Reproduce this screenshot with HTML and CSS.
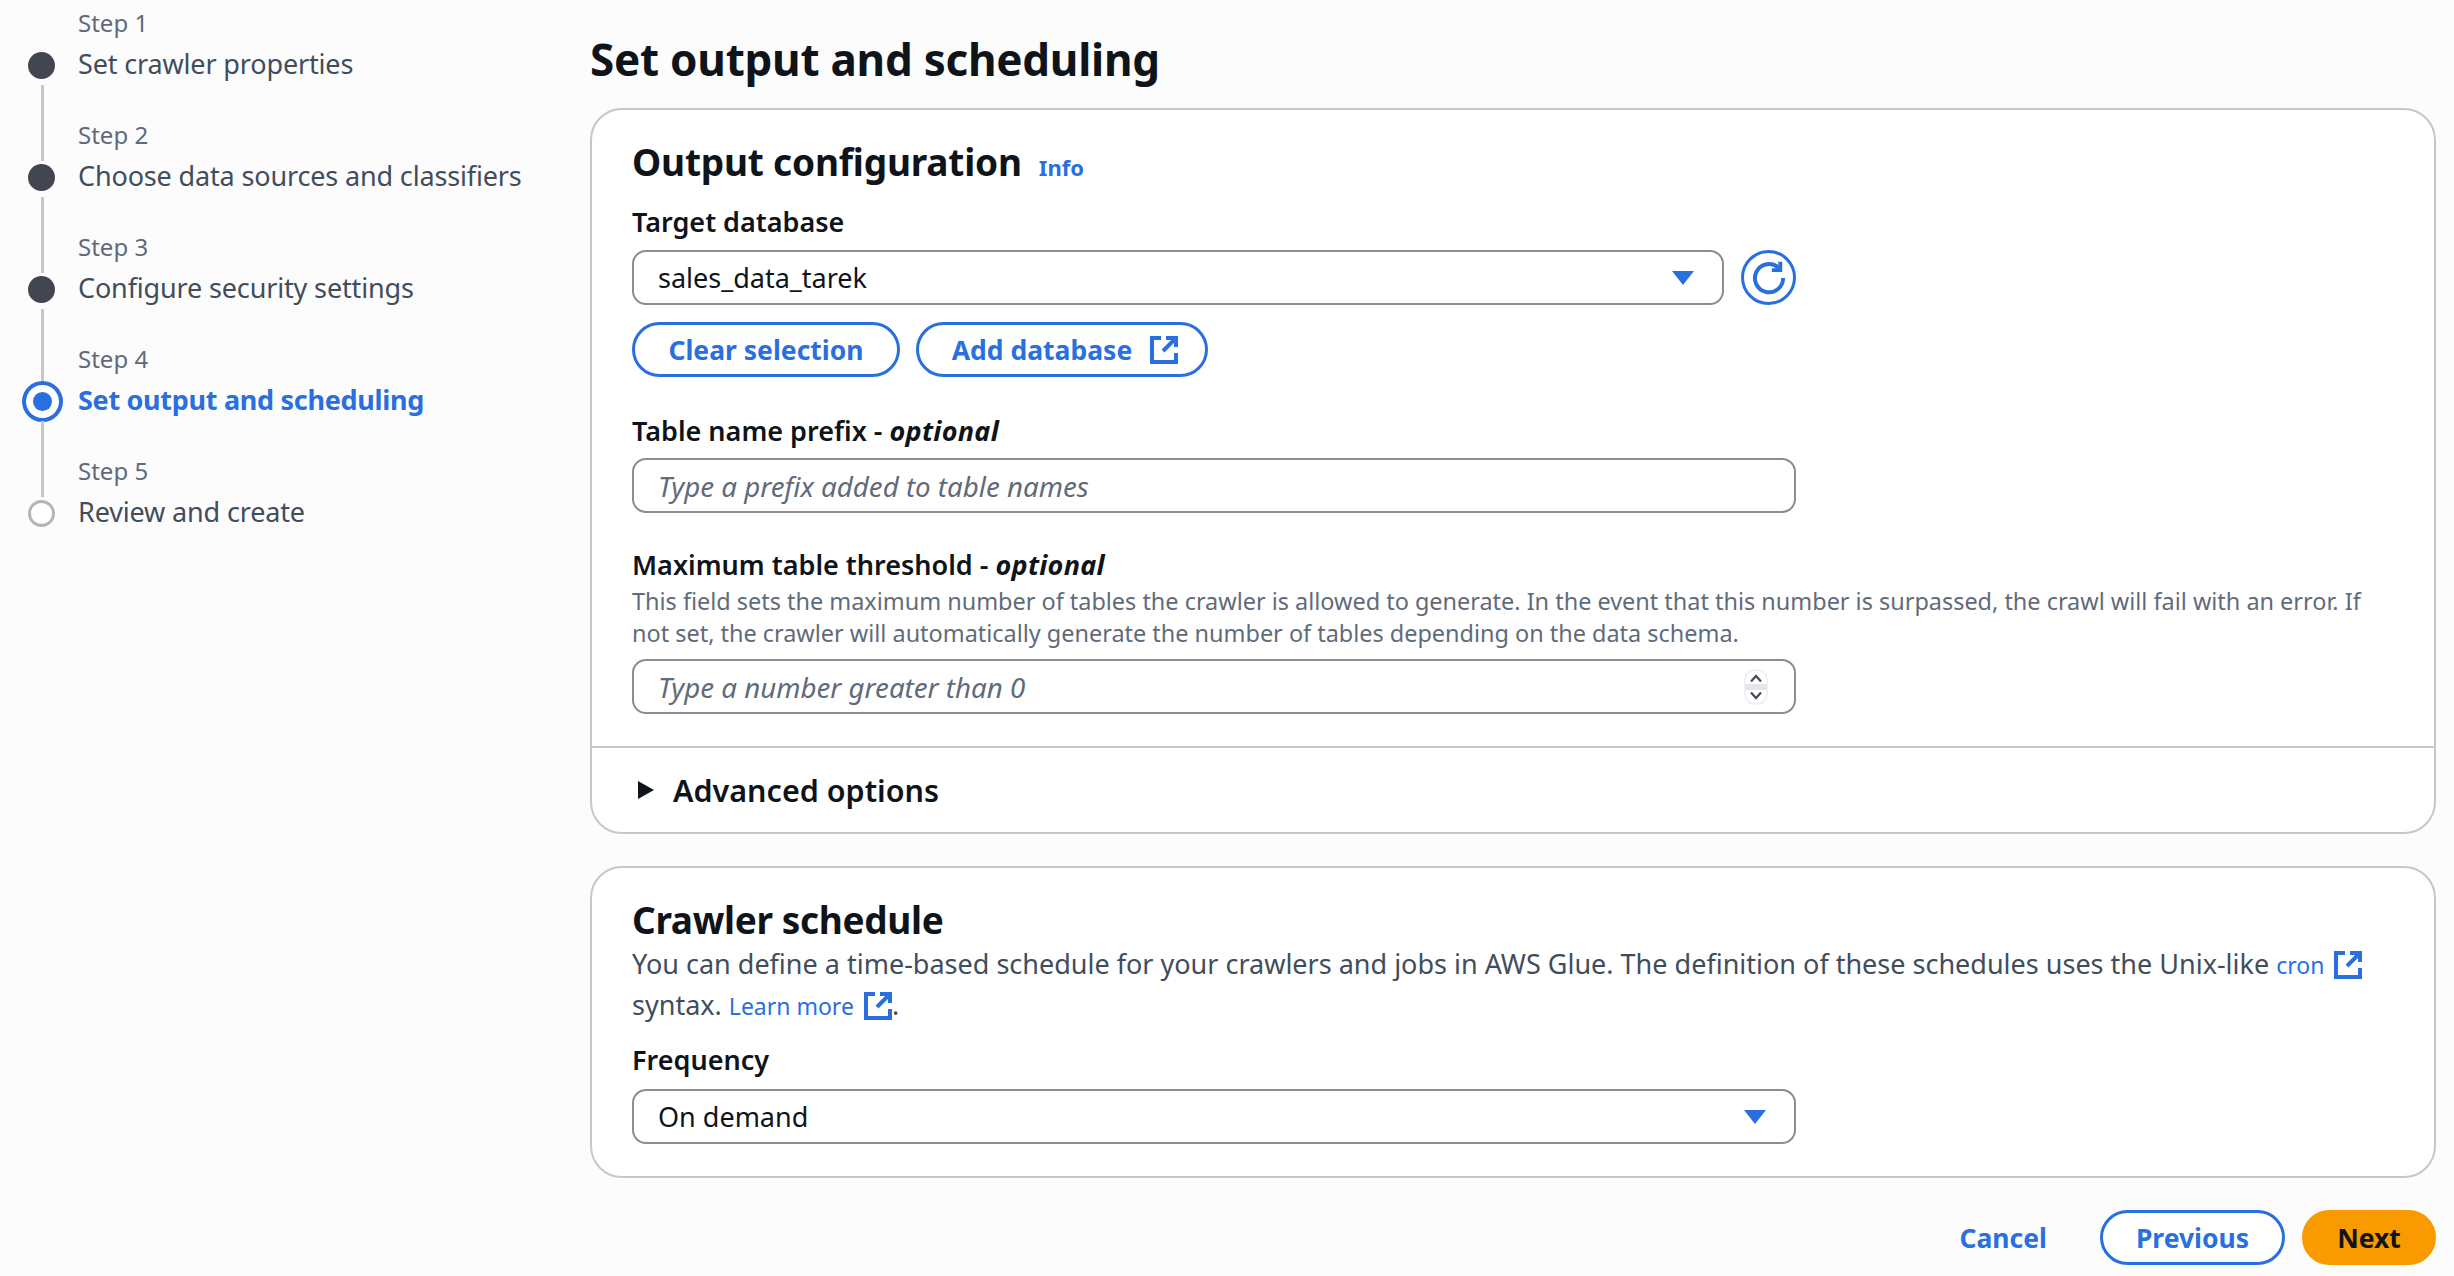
FILE: index.html
```html
<!DOCTYPE html>
<html lang="en">
<head>
<meta charset="utf-8">
<title>Set output and scheduling</title>
<link rel="stylesheet" href="styles.css">
</head>
<body>
<div class="page">
  <nav class="sidebar">
    <ol class="steps">
      <li class="step done"><span class="step-no">Step 1</span><span class="step-name">Set crawler properties</span></li>
      <li class="step done"><span class="step-no">Step 2</span><span class="step-name">Choose data sources and classifiers</span></li>
      <li class="step done"><span class="step-no">Step 3</span><span class="step-name">Configure security settings</span></li>
      <li class="step active"><span class="step-no">Step 4</span><span class="step-name">Set output and scheduling</span></li>
      <li class="step todo"><span class="step-no">Step 5</span><span class="step-name">Review and create</span></li>
    </ol>
  </nav>
  <main class="main">
    <h1 class="title">Set output and scheduling</h1>
    <section class="card card-output">
      <div class="card-body">
        <div class="card-head"><h2 class="card-title">Output configuration</h2><a class="info">Info</a></div>
        <div class="label label-first">Target database</div>
        <div class="select-row">
          <div class="control select-grow"><span class="value">sales_data_tarek</span><svg class="caret" viewBox="0 0 22 14"><path d="M0 0h22L11 14z"/></svg></div>
          <button class="round-btn"><svg viewBox="0 0 32 32" class="refresh"><path d="M24.500 7A12.500 12.500 0 1 0 28.500 16"/><path d="M26 1.500V9h-7.500"/></svg></button>
        </div>
        <div class="btn-row">
          <button class="btn btn-clear">Clear selection</button>
          <button class="btn btn-add">Add database<svg class="ext ext-btn" viewBox="0 0 28 28"><path d="M11 2H2v24h24v-9"/><path d="M16 2h10v9M26 2 13 15"/></svg></button>
        </div>
        <div class="label label-prefix">Table name prefix - <em>optional</em></div>
        <div class="control control-wide"><span class="placeholder">Type a prefix added to table names</span></div>
        <div class="label label-max">Maximum table threshold - <em>optional</em></div>
        <p class="hint">This field sets the maximum number of tables the crawler is allowed to generate. In the event that this number is surpassed, the crawl will fail with an error. If not set, the crawler will automatically generate the number of tables depending on the data schema.</p>
        <div class="control control-wide"><span class="placeholder">Type a number greater than 0</span>
          <svg class="spinner" viewBox="0 0 24 36"><rect x="1" y="1" width="22" height="34" rx="10" fill="#fff" stroke="#eeeef0" stroke-width="1.500"/><rect x="1.500" y="15" width="21" height="6" fill="#e6e6e9"/><path d="M7 12.500 12 7l5 5.500M7 23.500 12 29l5-5.500" fill="none" stroke="#414d5c" stroke-width="2.200"/></svg>
        </div>
      </div>
      <div class="advanced"><svg class="tri" viewBox="0 0 16 18"><path d="M0 0l16 9L0 18z"/></svg><span>Advanced options</span></div>
    </section>
    <section class="card card-schedule">
      <h2 class="card-title">Crawler schedule</h2>
      <p class="desc">You can define a time-based schedule for your crawlers and jobs in AWS Glue. The definition of these schedules uses the Unix-like <a class="link">cron<svg class="ext ext-link" viewBox="0 0 28 28"><path d="M11 2H2v24h24v-9"/><path d="M16 2h10v9M26 2 13 15"/></svg></a> syntax. <a class="link">Learn more<svg class="ext ext-link" viewBox="0 0 28 28"><path d="M11 2H2v24h24v-9"/><path d="M16 2h10v9M26 2 13 15"/></svg></a>.</p>
      <div class="label label-freq">Frequency</div>
      <div class="control control-wide"><span class="value">On demand</span><svg class="caret" viewBox="0 0 22 14"><path d="M0 0h22L11 14z"/></svg></div>
    </section>
    <div class="actions">
      <a class="cancel">Cancel</a>
      <button class="btn btn-prev">Previous</button>
      <button class="btn btn-next">Next</button>
    </div>
  </main>
</div>
</body>
</html>
```
FILE: styles.css
```css
*, *::before, *::after { box-sizing: border-box; }
html, body { margin: 0; height: 100%; }
body {
  background: #fcfcfc;
  color: #0f141a;
  font-family: "Noto Sans", "Liberation Sans", sans-serif;
  overflow: hidden;
}
.page { display: flex; height: 1276px; }
.sidebar { width: 590px; flex: none; }
.main { flex: 1; padding-right: 18px; display: flex; flex-direction: column; }

.steps { list-style: none; margin: 0; padding: 8px 0 0 78px; }
.step { position: relative; height: 112px; display: flex; flex-direction: column; }
.step-no { font-size: 24px; line-height: 30px; color: #5f6b7a; height: 37px; }
.step-name { font-size: 27px; line-height: 38px; letter-spacing: -.15px; color: #414d5c; }
.step::before {
  content: ""; position: absolute; left: -50px; top: 44px;
  width: 27px; height: 27px; border-radius: 50%; background: #424650;
}
.step::after {
  content: ""; position: absolute; left: -37px; top: 77px;
  width: 3px; height: 76px; background: #c6c6cd;
}
.step.todo::after { display: none; }
.step.todo::before { background: #fff; border: 3px solid #b4b4bb; }
.step.active .step-name { color: #2a6fe0; font-weight: 700; letter-spacing: -.3px; }
.step.active::before {
  left: -45px; top: 48px; width: 19px; height: 19px;
  background: #2a6fe0; box-shadow: 0 0 0 7px #fff, 0 0 0 11px #2a6fe0;
}

.title { margin: 0; font-size: 44px; line-height: 60px; font-weight: 700; height: 108px; padding-top: 29px; letter-spacing: -.25px; }

.card { background: #fff; border: 2px solid #c6c6cd; border-radius: 32px; }
.card-output { height: 726px; }
.card-schedule { height: 312px; margin-top: 32px; padding: 29px 40px 0; }
.card-body { padding: 27px 40px 0; height: 638px; border-bottom: 2px solid #c6c6cd; }
.card-head { display: flex; align-items: baseline; gap: 17px; height: 49px; }
.card-title { margin: 0; font-size: 37px; line-height: 50px; font-weight: 700; letter-spacing: -.2px; }
.info { font-size: 22px; font-weight: 700; color: #2a6fe0; }

.label { font-size: 27px; line-height: 34px; font-weight: 600; color: #0f141a; }
.label em { font-style: italic; font-weight: 700; letter-spacing: .3px; }
.label-first { margin-top: 19px; height: 45px; }
.label-prefix { margin-top: 37px; height: 44px; }
.label-max { margin-top: 35px; height: 34px; }
.label-freq { margin-top: 17px; height: 46px; }

.select-row { display: flex; gap: 17px; align-items: center; width: 1164px; }
.control {
  height: 55px; border: 2px solid #8c8c94; border-radius: 14px; background: #fff;
  padding: 0 28px 0 24px; display: flex; align-items: center; justify-content: space-between;
  font-size: 27px; position: relative;
}
.select-grow { flex: 1; }
.control-wide { width: 1164px; }
.value { color: #0f141a; }
.placeholder { color: #5f6b7a; font-style: italic; font-size: 27.700px; }
.caret { width: 22px; height: 14px; fill: #2a6fe0; }

.round-btn {
  width: 55px; height: 55px; flex: none; border-radius: 50%; border: 3px solid #2a6fe0; background: #fff;
  padding: 0; display: flex; align-items: center; justify-content: center;
}
.refresh { width: 36px; height: 36px; fill: none; stroke: #2a6fe0; stroke-width: 3.500; }

.btn-row { display: flex; gap: 16px; margin-top: 17px; }
.btn {
  height: 55px; border-radius: 28px; border: 3px solid #2a6fe0; background: #fff; color: #2a6fe0;
  font: 700 26.500px "Noto Sans", "Liberation Sans", sans-serif; padding: 0;
  display: flex; align-items: center; justify-content: center;
}
.btn-clear { width: 268px; }
.btn-add { width: 292px; gap: 18px; padding-left: 6px; }
.ext { fill: none; stroke: #2a6fe0; stroke-width: 4; }
.ext-btn { width: 28px; height: 28px; }
.ext-link { width: 28px; height: 28px; margin-left: 10px; vertical-align: -5px; }

.hint { margin: 0; max-width: 1745px; font-size: 23.450px; line-height: 32px; color: #5f6b7a; height: 77px; padding-top: 3px; }
.spinner { width: 24px; height: 36px; margin-right: -2px; }

.advanced { display: flex; align-items: center; height: 84px; padding: 0 0 0 46px; gap: 19px; font-size: 30.500px; font-weight: 600; }
.tri { width: 16px; height: 18px; fill: #0f141a; }

.desc { margin: 0; font-size: 27px; line-height: 40px; color: #414d5c; }
.link { color: #2a6fe0; font-size: 23px; }
.card-schedule .card-title { line-height: 46px; height: 47px; letter-spacing: -.35px; }

.actions { display: flex; justify-content: flex-end; align-items: center; margin-top: 32px; }
.cancel { font-size: 26.500px; font-weight: 700; color: #2a6fe0; margin-right: 53px; }
.btn-prev { width: 185px; }
.btn-next { width: 134px; margin-left: 17px; background: #f89a00; border-color: #f89a00; color: #0f141a; }
```
